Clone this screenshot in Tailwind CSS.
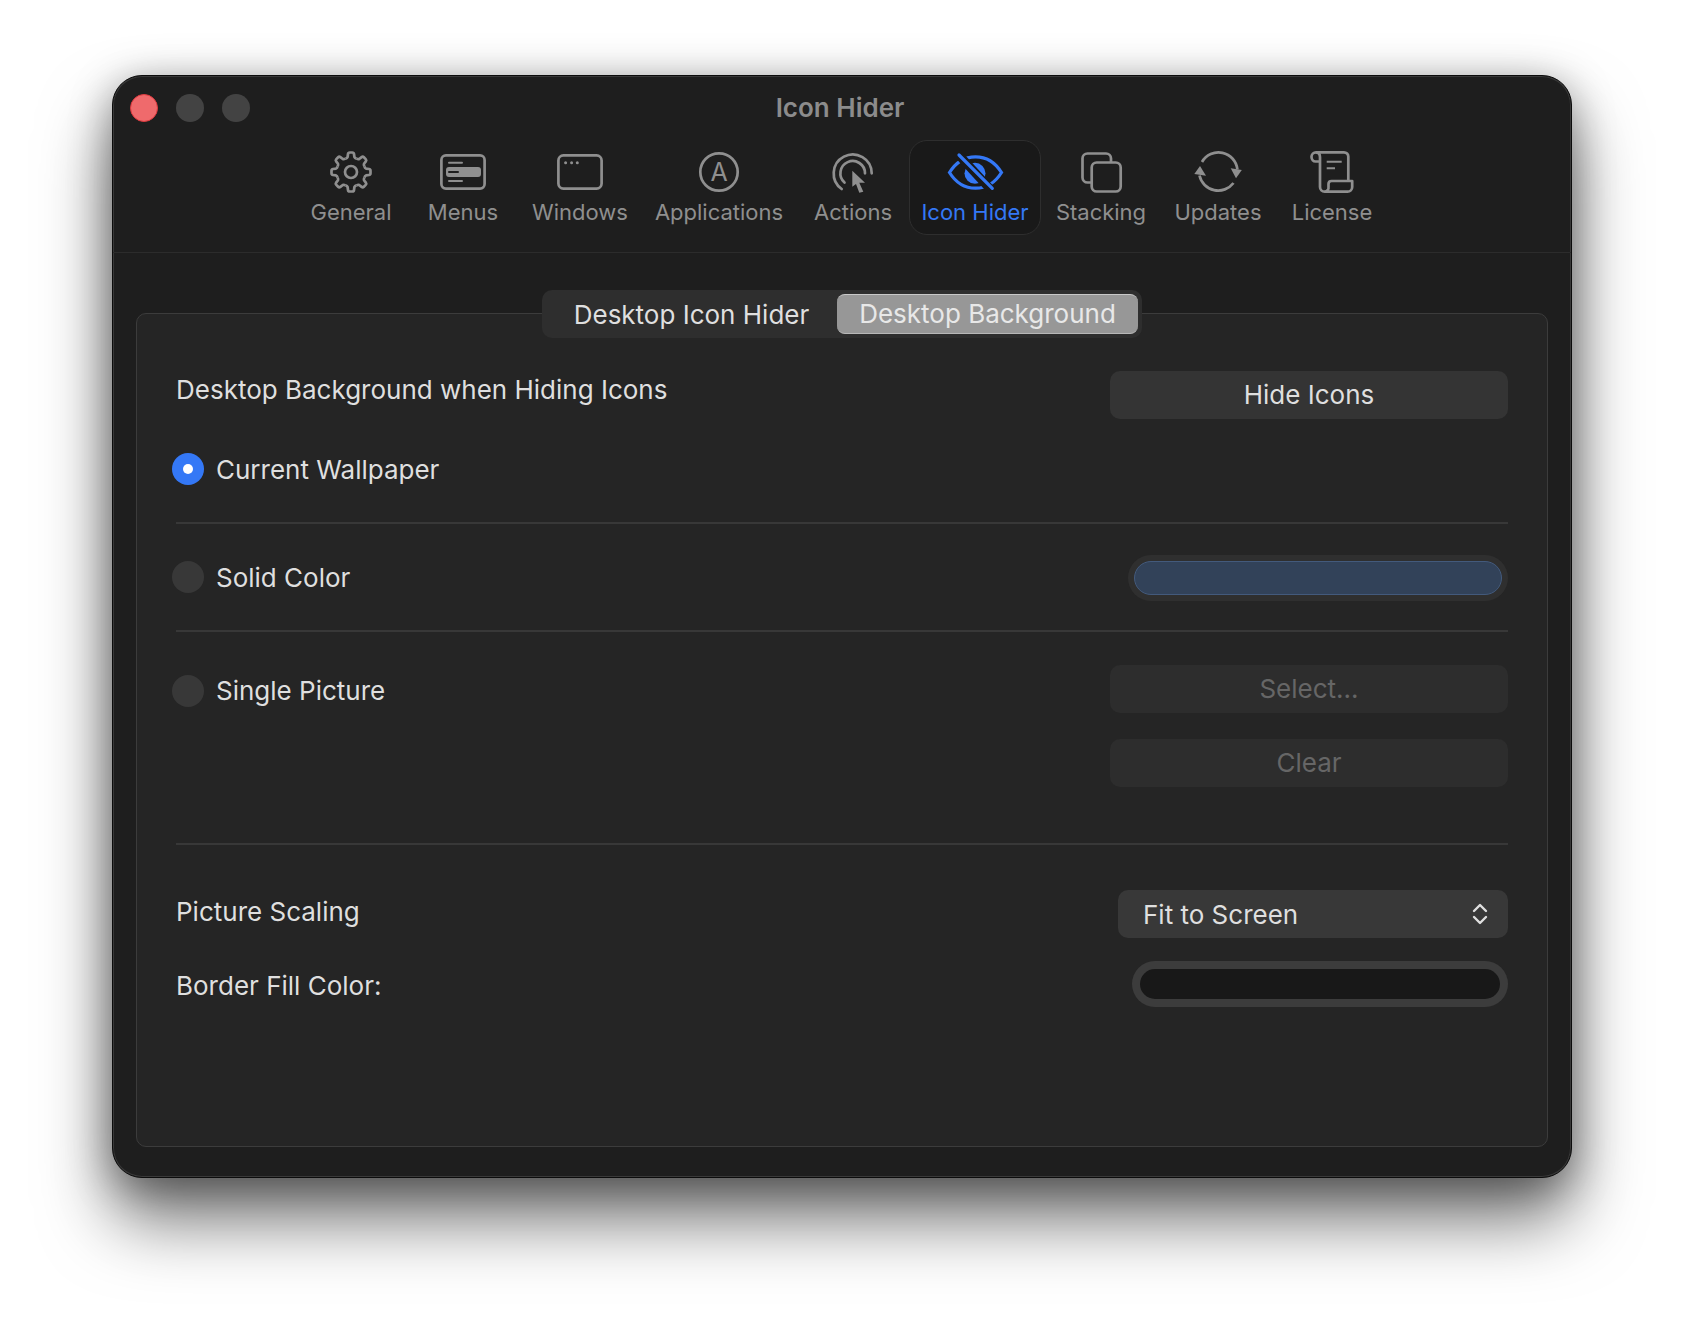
<!DOCTYPE html>
<html lang="en">
<head>
    <meta charset="UTF-8">
    <title>Icon Hider</title>
    <script src="https://cdn.jsdelivr.net/npm/@tailwindcss/browser@4"></script>
</head>
<body class="bg-white font-[family-name:Inter] h-[1326px] w-[1684px] overflow-hidden">
    <!-- Window -->
    <div class="ml-[112px] mt-[75px] w-[1460px] h-[1103px] bg-[#1e1e1e] rounded-[30px] border border-[#0c0c0c] flex flex-col shadow-[inset_0_0_0_1px_rgba(255,255,255,0.12),0_42px_70px_rgba(0,0,0,0.55),0_8px_40px_rgba(0,0,0,0.35)]">
        <!-- Title bar -->
        <div class="grid grid-cols-[1fr_auto_1fr] pt-[18px] h-[46px] shrink-0">
            <div class="flex gap-[18px] pl-[17px]">
                <div class="w-[28px] h-[28px] rounded-full bg-[#ef6a6c] border border-[#e0393e]"></div>
                <div class="w-[28px] h-[28px] rounded-full bg-[#434343]"></div>
                <div class="w-[28px] h-[28px] rounded-full bg-[#434343]"></div>
            </div>
            <div class="text-[26px] leading-[28px] font-semibold text-[#8c8c8c] pr-[4px]">Icon Hider</div>
            <div></div>
        </div>

        <!-- Toolbar -->
        <div class="mt-[18px] pl-[182px] pb-[17px] flex border-b border-[#2c2c2c] shrink-0 text-[22px] leading-[28px] text-[#8f8f8f]">
            <div class="w-[112px] h-[95px] pt-[10px] flex flex-col items-center">
                <svg width="44" height="44" viewBox="-1 -1 44 44" fill="none" stroke="#8f8f8f" stroke-width="2.7" stroke-linejoin="round">
                    <defs><path id="tooth" d="M15.45 7.6Q17.2 7.1 17.6 6L18 3Q18.2 1.5 19.7 1.5H22.3Q23.8 1.5 24 3L24.4 6Q24.8 7.1 26.55 7.6"/></defs>
                    <use href="#tooth"/>
                    <use href="#tooth" transform="rotate(45 21 21)"/>
                    <use href="#tooth" transform="rotate(90 21 21)"/>
                    <use href="#tooth" transform="rotate(135 21 21)"/>
                    <use href="#tooth" transform="rotate(180 21 21)"/>
                    <use href="#tooth" transform="rotate(225 21 21)"/>
                    <use href="#tooth" transform="rotate(270 21 21)"/>
                    <use href="#tooth" transform="rotate(315 21 21)"/>
                    <circle cx="21" cy="21" r="6"/>
                </svg>
                <span class="mt-[4px]">General</span>
            </div>
            <div class="w-[112px] h-[95px] pt-[10px] flex flex-col items-center">
                <svg width="50" height="44" viewBox="0 0 50 44" fill="none" stroke="#8f8f8f" stroke-width="2.7" stroke-linecap="round">
                    <rect x="3.4" y="5.4" width="43.2" height="33.2" rx="4.5"/>
                    <path d="M11 12.7H24M11 31H24" stroke-width="2"/>
                    <rect x="8" y="17" width="35" height="10" rx="3" fill="#8f8f8f" stroke="none"/>
                    <path d="M11 22H20" stroke="#1e1e1e" stroke-width="2"/>
                </svg>
                <span class="mt-[4px]">Menus</span>
            </div>
            <div class="w-[122px] h-[95px] pt-[10px] flex flex-col items-center">
                <svg width="50" height="44" viewBox="0 0 50 44" fill="none" stroke="#8f8f8f" stroke-width="2.7">
                    <rect x="3.4" y="5.4" width="43.2" height="33.2" rx="5"/>
                    <circle cx="10.6" cy="12.7" r="1.5" fill="#8f8f8f" stroke="none"/>
                    <circle cx="16.6" cy="12.7" r="1.5" fill="#8f8f8f" stroke="none"/>
                    <circle cx="22.3" cy="12.7" r="1.5" fill="#8f8f8f" stroke="none"/>
                </svg>
                <span class="mt-[4px]">Windows</span>
            </div>
            <div class="w-[156px] h-[95px] pt-[10px] flex flex-col items-center">
                <svg width="44" height="44" viewBox="0 0 44 44" fill="none" stroke="#8f8f8f" stroke-width="2.7">
                    <circle cx="22" cy="22" r="18.7"/>
                    <text x="22" y="31" text-anchor="middle" font-family="Inter" font-size="25" fill="#8f8f8f" stroke="none">A</text>
                </svg>
                <span class="mt-[4px]">Applications</span>
            </div>
            <div class="w-[112px] h-[95px] pt-[10px] flex flex-col items-center">
                <svg width="46" height="44" viewBox="0 0 46 44" fill="none" stroke="#8f8f8f" stroke-width="2.7" stroke-linecap="round">
                    <path d="M11.7 39A19 19 0 1 1 41.7 23.3"/>
                    <path d="M14.5 32.5A12.3 12.3 0 1 1 35 23.3"/>
                    <path d="M22.3 20.7L35 32.7H29.3L33.3 41.7L29.3 42.7L26 34L22.3 36.7Z" fill="#8f8f8f" stroke="#1e1e1e" stroke-width="1.5" stroke-linejoin="round" paint-order="stroke"/>
                </svg>
                <span class="mt-[4px]">Actions</span>
            </div>
            <!-- Active tab -->
            <div class="w-[132px] h-[95px] pt-[10px] flex flex-col items-center bg-[#191919] rounded-[18px] border border-[#2e2e2e] text-[#3478f6]">
                <svg width="60" height="44" viewBox="0 0 60 44" fill="none" stroke="#3478f6" stroke-width="3.2" class="-mt-px">
                    <path d="M4.5 22.5C11 12 20 6.8 30.5 6.8S50 12 56.5 22.5C50 33 41 38.2 30.5 38.2S11 33 4.5 22.5Z"/>
                    <circle cx="30" cy="23.3" r="10.5" fill="#3478f6" stroke="none"/>
                    <path d="M12 3L47 41" stroke="#191919" stroke-width="9"/>
                    <path d="M14 5L47.3 38.3" stroke-linecap="round"/>
                </svg>
                <span class="mt-[4px]">Icon Hider</span>
            </div>
            <div class="w-[120px] h-[95px] pt-[10px] flex flex-col items-center">
                <svg width="50" height="44" viewBox="0 2 50 44" fill="none" stroke="#8f8f8f" stroke-width="2.7">
                    <rect x="6.5" y="5.5" width="28.5" height="29" rx="5"/>
                    <rect x="15.7" y="14.5" width="29" height="29" rx="5" fill="#1e1e1e"/>
                </svg>
                <span class="mt-[4px]">Stacking</span>
            </div>
            <div class="w-[114px] h-[95px] pt-[10px] flex flex-col items-center">
                <svg width="48" height="44" viewBox="0 2 48 44" fill="none" stroke="#8f8f8f" stroke-width="2.7">
                    <path d="M8 14A19 19 0 0 1 43.4 21.5"/>
                    <path d="M5.5 27.5A19.2 19.2 0 0 0 39.5 35"/>
                    <path d="M36.7 20.3L47.8 22L42 30.3Z" fill="#8f8f8f" stroke="none"/>
                    <path d="M0.3 26L12 27.7L6 18Z" fill="#8f8f8f" stroke="none"/>
                </svg>
                <span class="mt-[4px]">Updates</span>
            </div>
            <div class="w-[114px] h-[95px] pt-[10px] flex flex-col items-center">
                <svg width="48" height="44" viewBox="0 2 48 44" fill="none" stroke="#8f8f8f" stroke-width="2.7" stroke-linejoin="round">
                    <path d="M8 4.3H36A4.3 4.3 0 0 1 40.3 8.6V33"/>
                    <path d="M8 4.3A4.5 4.5 0 0 0 3.5 8.8C3.5 11.8 5.5 13.5 7.5 13.5H12"/>
                    <path d="M8 4.3C11 4.3 12 6.8 12 9.3V39A4.7 4.7 0 0 0 16.7 43.7H39.5A4.7 4.7 0 0 0 44.2 39V33H23.5C21.5 33 20.5 34.2 20.5 36V39A4 4 0 0 1 16.7 43.7"/>
                    <path d="M18.7 13.7H33.7M18.7 20.3H27" stroke-width="2"/>
                </svg>
                <span class="mt-[4px]">License</span>
            </div>
        </div>

        <!-- Tab panel -->
        <div class="relative mt-[60px] mx-[23px] h-[834px] shrink-0 bg-[#252525] border border-[#3c3c3c] rounded-[10px] pt-[57px] px-[39px] text-[26px] text-[#dfdfdf]">
            <div class="absolute left-[405px] -top-[24px] w-[600px] h-[48px] bg-[#2e2e2e] rounded-[10px] flex items-center pl-[4px] pr-[4px]">
                <div class="w-[291px] text-center">Desktop Icon Hider</div>
                <div class="w-[301px] h-[40px] leading-[38px] text-center bg-[#979797] rounded-[8px] border-t border-b border-t-[#c8c8c8] border-b-[#b8b8b8] text-[#e8e8e8]">Desktop Background</div>
            </div>

            <div class="flex justify-between h-[48px]">
                <div class="leading-[38px]">Desktop Background when Hiding Icons</div>
                <div class="w-[398px] h-[48px] leading-[48px] text-center rounded-[10px] bg-[#343434]">Hide Icons</div>
            </div>

            <div class="mt-[34px] -ml-[4px] flex items-center gap-[12px] h-[32px]">
                <div class="w-[32px] h-[32px] rounded-full bg-[#3478f6] flex items-center justify-center">
                    <div class="w-[10px] h-[10px] rounded-full bg-white"></div>
                </div>
                <span>Current Wallpaper</span>
            </div>
            <div class="mt-[37px] h-[2px] bg-[#383838]"></div>

            <div class="mt-[31px] flex justify-between items-center h-[46px]">
                <div class="-ml-[4px] flex items-center gap-[12px] pb-[2px]">
                    <div class="w-[32px] h-[32px] rounded-full bg-[#383838]"></div>
                    <span>Solid Color</span>
                </div>
                <div class="w-[380px] h-[46px] rounded-full bg-[#2f2f2f] p-[6px]">
                    <div class="h-[34px] rounded-full bg-[#324259] border border-[#435a7c]"></div>
                </div>
            </div>
            <div class="mt-[29px] h-[2px] bg-[#383838]"></div>

            <div class="mt-[33px] flex justify-between items-start">
                <div class="-ml-[4px] mt-[6px] flex items-center gap-[12px]">
                    <div class="w-[32px] h-[32px] rounded-full bg-[#383838]"></div>
                    <span>Single Picture</span>
                </div>
                <div class="w-[398px] flex flex-col gap-[26px] text-[#666666]">
                    <div class="h-[48px] leading-[48px] text-center rounded-[10px] bg-[#2d2d2d]">Select...</div>
                    <div class="h-[48px] leading-[48px] text-center rounded-[10px] bg-[#2d2d2d]">Clear</div>
                </div>
            </div>
            <div class="mt-[56px] h-[2px] bg-[#383838]"></div>

            <div class="mt-[45px] flex justify-between h-[48px]">
                <div class="leading-[44px]">Picture Scaling</div>
                <div class="w-[390px] h-[48px] rounded-[10px] bg-[#383838] pl-[25px] pr-[20px] flex items-center justify-between">
                    <span>Fit to Screen</span>
                    <svg width="16" height="22" viewBox="0 0 16 22" fill="none" stroke="#dfdfdf" stroke-width="2.4" stroke-linecap="round" stroke-linejoin="round">
                        <path d="M2 8L8 2L14 8M2 14L8 20L14 14"/>
                    </svg>
                </div>
            </div>

            <div class="mt-[23px] flex justify-between h-[46px]">
                <div class="leading-[50px]">Border Fill Color:</div>
                <div class="w-[376px] h-[46px] rounded-full bg-[#3c3c3c] p-[8px]">
                    <div class="h-[30px] rounded-full bg-[#181818]"></div>
                </div>
            </div>
        </div>
    </div>
</body>
</html>
